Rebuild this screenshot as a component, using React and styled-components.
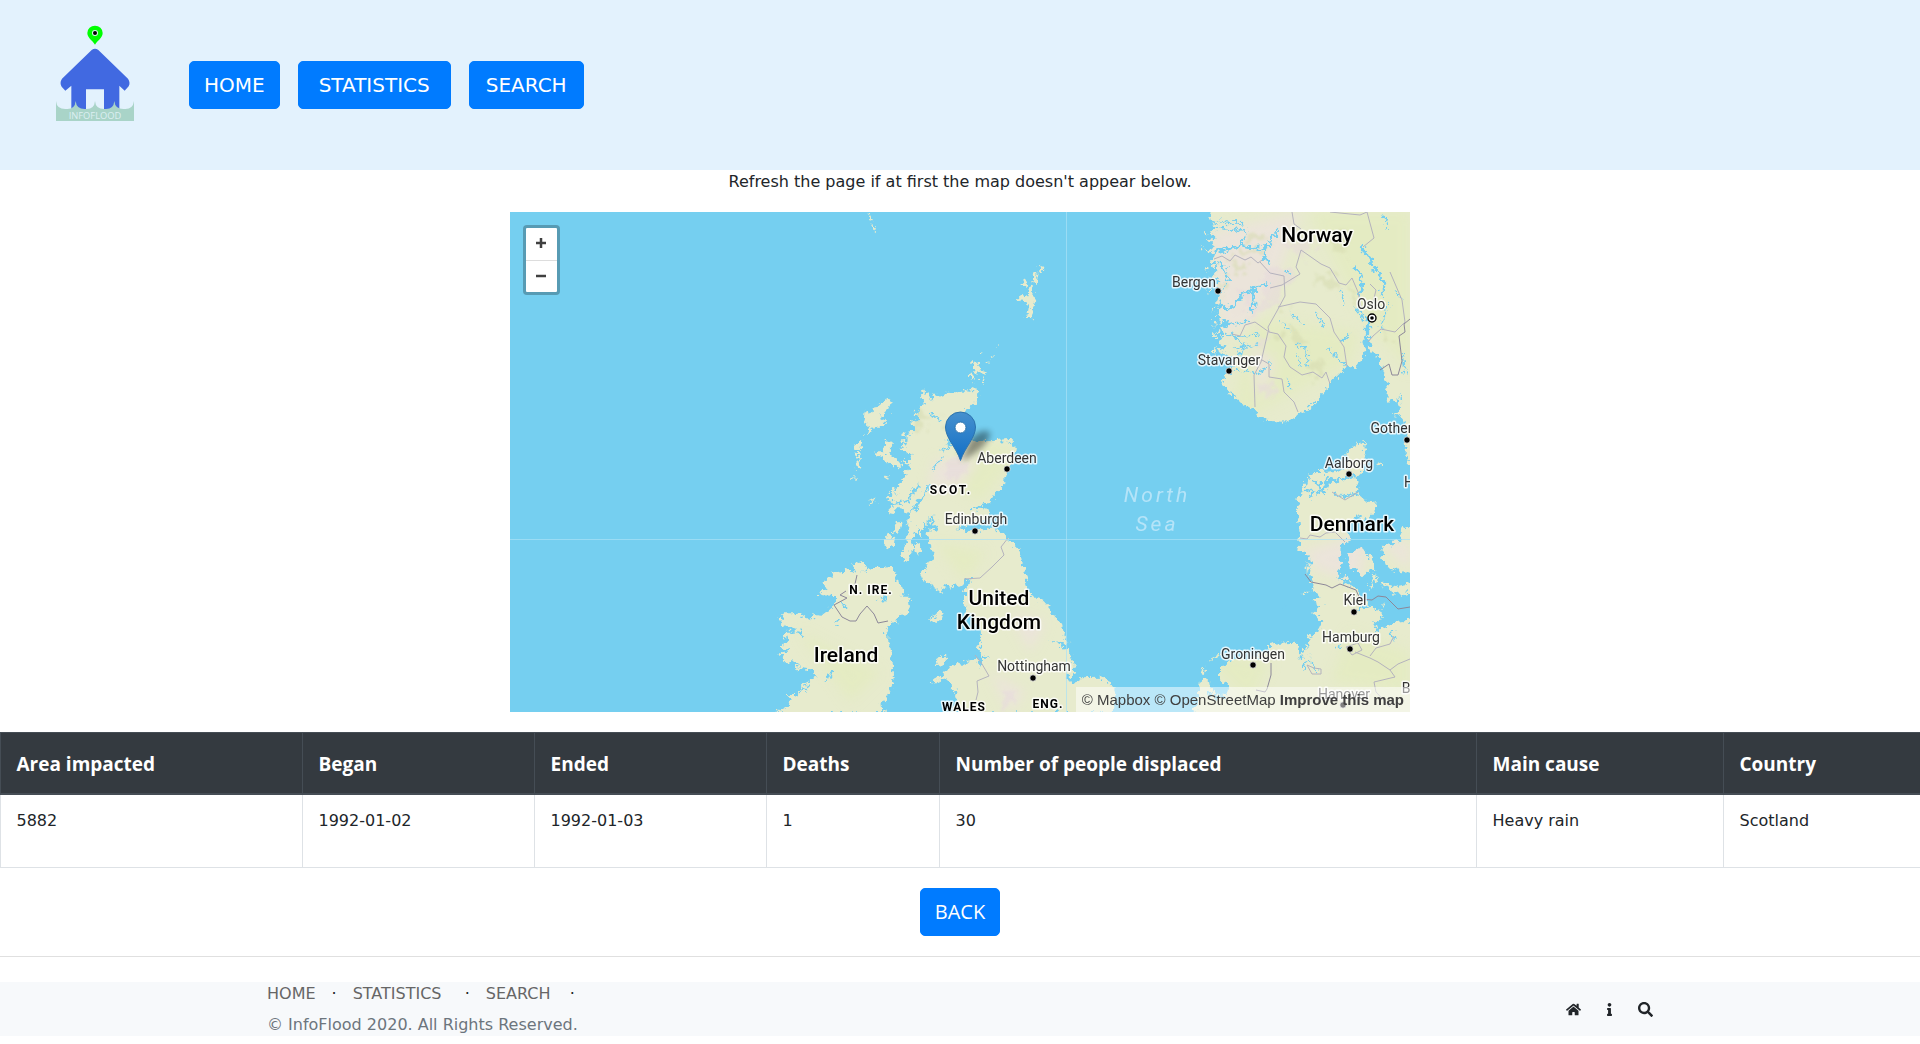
import React from "react";
import styled, { createGlobalStyle } from "styled-components";
import { FaHome, FaInfo, FaSearch } from "react-icons/fa";

const verdana = `Verdana, "DejaVu Sans", sans-serif`;
const segoe = `"Segoe UI", "Open Sans", sans-serif`;

const GlobalStyle = createGlobalStyle`
  *, *::before, *::after { box-sizing: border-box; }
  body {
    margin: 0;
    background: #fff;
    color: #212529;
    font-family: ${verdana};
    font-size: 16px;
    line-height: 24px;
  }
`;

const Header = styled.header`
  display: flex;
  align-items: center;
  min-height: 170px;
  padding: 0 55px;
  background: #e3f2fd;
`;

const LogoLink = styled.a`
  display: block;
  padding-bottom: 23px;
  margin-right: 54px;
  svg { display: block; }
`;

const Nav = styled.nav`
  display: flex;
  gap: 18px;
`;

const Button = styled.button`
  min-width: ${(p) => p.$min || 80}px;
  padding: 8px 14px;
  border: 1px solid #007bff;
  border-radius: 5px;
  background: #007bff;
  color: #fff;
  font-family: ${(p) => p.$font || verdana};
  font-size: 20px;
  line-height: 30px;
  cursor: pointer;
`;

const Main = styled.main`
  display: flex;
  flex-direction: column;
  align-items: center;
`;

const Hint = styled.p`
  margin: 0 0 18px;
`;

const MapBox = styled.section`
  position: relative;
  width: 900px;
  max-width: 100%;
  height: 500px;
  overflow: hidden;
  background: #75cff0;
`;

const MapDrawing = styled.svg`
  display: block;
`;

const ZoomControl = styled.div`
  position: absolute;
  top: 13px;
  left: 13px;
  display: flex;
  flex-direction: column;
  border: 3px solid rgba(0, 0, 0, 0.25);
  border-radius: 4px;
  background: #fff;
  background-clip: padding-box;
`;

const ZoomButton = styled.button`
  display: grid;
  place-items: center;
  width: 31px;
  height: 32px;
  padding: 0 1px 2px 0;
  border: 0;
  background: transparent;
  cursor: pointer;
  & + & { border-top: 1px solid #ddd; }
`;

const Attribution = styled.div`
  position: absolute;
  right: 0;
  bottom: 0;
  padding: 0 6px;
  background: rgba(255, 255, 255, 0.5);
  color: #404040;
  font-family: Arial, "Liberation Sans", sans-serif;
  font-size: 15px;
  line-height: 25px;
  a { color: inherit; text-decoration: none; }
`;

const Label = styled.text`
  font-family: Roboto, sans-serif;
  font-size: ${(p) => p.$size || 14}px;
  font-weight: ${(p) => p.$weight || 400};
  font-style: ${(p) => (p.$sea ? "italic" : "normal")};
  letter-spacing: ${(p) => p.$spacing || 0}px;
  fill: ${(p) => (p.$sea ? "#b5e4f8" : p.$weight ? "#000" : "#333")};
  stroke: ${(p) => (p.$sea ? "none" : "#fff")};
  stroke-width: 3px;
  stroke-opacity: 0.8;
  stroke-linejoin: round;
  paint-order: stroke;
  text-anchor: middle;
`;

const Table = styled.table`
  width: 100%;
  margin: 20px 0;
  border-collapse: collapse;
  table-layout: fixed;
`;

const Th = styled.th`
  padding: 16px 15px 14px 16px;
  border: 1px solid #454d55;
  border-bottom-width: 2px;
  background: #343a40;
  color: #fff;
  font-family: ${segoe};
  font-size: 19px;
  line-height: 30px;
  text-align: left;
`;

const Td = styled.td`
  padding: 14px 15px 34px 16px;
  border: 1px solid #dee2e6;
`;

const Rule = styled.hr`
  width: 100%;
  margin: 20px 0 25px;
  border: 0;
  border-top: 1px solid #e0e0e0;
`;

const Footer = styled.footer`
  background: #f7f9fb;
`;

const FooterInner = styled.div`
  display: flex;
  align-items: center;
  justify-content: space-between;
  max-width: 1386px;
  margin: 0 auto;
`;

const FooterLinks = styled.ul`
  display: flex;
  gap: 16px;
  margin: 0 0 8px;
  padding: 0;
  list-style: none;
  a { color: #666; text-decoration: none; }
`;

const FooterItem = styled.li`
  min-width: ${(p) => p.$min || 0}px;
`;

const Copyright = styled.p`
  margin: 0;
  color: #6c757d;
  line-height: 22px;
`;

const IconLinks = styled.div`
  display: flex;
  align-items: center;
  gap: 22px;
  a { display: block; color: #212529; }
  svg { display: block; }
`;

function Logo() {
  return (
    <svg width="80" height="97" viewBox="45 45 240 291" role="img" aria-label="InfoFlood">
      <path d="M165 104C158 92 142 84 142 69A23 22 0 0 1 188 69C188 84 172 92 165 104Z" fill="#0f0" />
      <circle cx="165" cy="69" r="9" fill="#d9f7e8" />
      <circle cx="165" cy="69" r="6" fill="#000" />
      <path d="M155 120Q165 112 175 120L264 206Q272 218 266 229L254 242 238 227V305H192V238H138V305H94V227L76 242 65 230Q58 218 66 206Z" fill="#4169e1" />
      <path d="M48 273Q50 297 76 297H82Q105 297 107 273Q109 297 134 297H140Q163 297 165 273Q167 297 192 297H198Q221 297 223 273Q225 297 250 297H256Q279 297 282 273V333H48Z" fill="#a9d4c8" />
      <text x="165" y="326" textAnchor="middle" fontFamily="Open Sans, sans-serif" fontSize="28" fontWeight="400" fill="#dceff2">INFOFLOOD</text>
    </svg>
  );
}

const towns = [
  ["Bergen", 684, 75, 708, 79],
  ["Stavanger", 719, 153, 719, 159],
  ["Aberdeen", 497, 251, 497, 257],
  ["Edinburgh", 466, 312, 465, 319],
  ["Nottingham", 524, 459, 523, 466],
  ["Gothenburg", 897, 221, 897, 228],
  ["Aalborg", 839, 256, 839, 262],
  ["Kiel", 845, 393, 844, 400],
  ["Hamburg", 841, 430, 840, 437],
  ["Groningen", 743, 447, 743, 453],
  ["Hanover", 834, 487, 833, 493],
];

function SeaMap() {
  return (
    <MapDrawing width="900" height="500" viewBox="0 0 900 500" role="img" aria-label="Map of the North Sea with a marker in Scotland">
      <defs>
        <filter id="coast" x="0" y="0" width="900" height="500" filterUnits="userSpaceOnUse" colorInterpolationFilters="sRGB">
          <feTurbulence type="fractalNoise" baseFrequency="0.2" numOctaves="3" seed="4" result="n" />
          <feDisplacementMap in="SourceGraphic" in2="n" scale="11" xChannelSelector="R" yChannelSelector="G" />
        </filter>
        <filter id="soft"><feGaussianBlur stdDeviation="6" /></filter>
        <filter id="relief" x="0" y="0" width="900" height="500" filterUnits="userSpaceOnUse" colorInterpolationFilters="sRGB">
          <feTurbulence type="fractalNoise" baseFrequency="0.07" numOctaves="3" seed="9" result="n" />
          <feDisplacementMap in="SourceGraphic" in2="n" scale="40" xChannelSelector="R" yChannelSelector="G" />
          <feGaussianBlur stdDeviation="0.8" />
        </filter>
        <filter id="shade" x="-50%" y="-50%" width="200%" height="200%"><feGaussianBlur stdDeviation="3" /></filter>
        <linearGradient id="pin" x1="0" y1="0" x2="0" y2="1">
          <stop offset="0" stopColor="#4690ce" />
          <stop offset="1" stopColor="#126fc6" />
        </linearGradient>
        <g id="land">
          <g transform="translate(270 18) scale(.33333)">
            <path d="M432 483L448 488 440 497 452 500 456 512 462 495 470 488 476 500 490 494 500 488 530 490 560 484 572 486 585 478 596 480 594 505 580 520 565 535 560 545 545 560 530 590 520 600 512 628 500 645 520 642 548 628 575 632 600 630 625 634 655 632 690 630 703 648 703 690 692 700 682 720 674 750 660 775 640 790 632 820H345L330 808 352 790 380 786 400 775 375 768 360 745 388 740 365 728 385 715 395 700 372 700 362 690 395 690 390 672 362 650 382 642 360 632 385 628 365 608 395 615 385 600 410 600 395 572 420 570 400 545 425 545 420 530 432 515 425 500Z" />
            <path d="M326 500L332 515 325 540 312 548 300 565 316 575 305 590 285 590 275 608 258 618 262 600 270 590 250 575 254 545 270 555 290 530 312 512Z" />
            <path d="M218 645L240 632 248 640 238 652 245 658 222 656ZM230 665L242 668 238 690 242 718 228 720 226 700 233 690ZM216 746L228 736 224 746Z" />
            <path d="M318 632L332 640 334 670 345 690 362 700 366 716 345 708 325 705 308 682 282 672 284 664 308 664 312 645ZM311 735L322 733 324 745 314 746Z" />
            <path d="M574 398L590 393 600 402 596 418 612 422 618 434 596 430 580 424 574 412ZM568 432L578 430 585 448 576 452ZM604 442L610 444 608 460 602 456ZM600 366L608 368 604 376ZM634 378L642 368 640 382ZM622 398L628 394 628 402ZM648 358L654 354 650 364Z" />
            <path d="M780 108L790 112 788 130 776 134ZM764 126L773 130 770 160 756 160ZM735 148L747 150 742 168 724 164ZM745 170L759 180 762 205 770 222 758 230 752 268 740 266 746 230 744 217 730 218 713 208 716 198 738 202Z" />
            <path d="M262 -48L274 -44 280 -30 272 -34ZM274 -24L288 0 286 6 276 -6Z" />
          </g>
          <g transform="translate(250 238) scale(.33333)">
            <path d="M445 60L765 0 760 20 750 45 735 75 720 95 705 125 700 145 680 160 650 170 632 178 665 175 688 182 684 202 660 215 620 226 600 230 620 240 660 242 690 232 720 245 745 265 760 280 778 300 790 350 800 390 805 420 815 440 850 452 875 480 890 510 905 520 915 560 928 580 905 580 870 570 905 588 930 610 945 650 940 670 920 690 945 703 960 682 1020 680 1055 698 1068 735 1060 790H575L590 745 580 710 555 688 530 700 512 700 545 675 565 650 620 635 650 630 665 650 670 630 695 625 670 620 655 598 665 570 662 545 650 520 620 490 612 460 612 425 622 400 640 392 615 388 600 410 575 405 560 415 545 405 545 430 520 410 495 395 482 375 500 350 515 320 522 295 505 280 500 250 515 240 532 242 520 200 512 200 520 235 500 195 500 238 490 220 485 262 470 230 465 265 452 258 462 285 440 335 425 335 430 300 445 262 440 235 455 190 430 185 420 170 400 190 380 185 405 160 380 150 400 130 430 130 385 125 415 110 440 95Z" />
            <path d="M530 630L545 615 560 630 550 648 535 645ZM540 478L548 482 540 505 520 520 514 515 525 492ZM468 278L480 285 482 308 470 318 462 300ZM385 248L405 262 400 290 380 295 366 275ZM410 220L430 218 415 245 400 250ZM326 158L355 142 345 152 330 162Z" />
            <path d="M285 340L300 335 322 350 305 368 330 355 395 352 405 370 410 395 428 410 430 435 420 440 445 440 450 470 440 490 415 492 412 515 385 528 375 545 385 560 385 590 398 605 395 640 402 665 400 700 385 735 365 765 375 790H45L90 765 80 735 105 735 130 705 160 690 165 670 150 655 130 652 100 655 120 640 75 635 60 610 90 600 60 590 90 570 70 560 80 545 110 545 60 520 65 490 105 490 130 495 145 510 165 492 190 495 225 465 225 435 172 432 200 415 190 395 215 380 215 365 250 372 265 352 275 368 285 370 275 345Z" />
          </g>
          <path transform="translate(630 -12) scale(.33333)" d="M205 20L215 60 235 70 210 80 240 85 205 100 235 110 200 120 225 140 195 150 230 165 205 180 240 185 215 200 235 215 210 235 245 240 230 262 240 285 225 300 250 310 240 330 225 345 250 345 240 370 268 352 265 375 230 395 255 400 235 425 260 440 230 455 270 465 285 500 265 515 250 535 255 560 275 585 300 605 325 622 345 628 355 650 380 662 430 665 465 655 480 640 505 625 530 600 555 575 575 545 600 520 620 500 645 505 665 480 675 450 665 420 680 400 678 360 688 360 687 420 695 460 715 470 725 500 735 530 745 570 740 605 775 600 780 625 760 650 785 645 795 670 800 700 795 740 805 790H850V20Z" />
          <path transform="translate(630 -12) scale(.33333)" d="M185 140L194 144 190 152ZM198 200L206 206 202 220ZM205 262L214 270 206 282ZM218 320L226 322 222 336ZM222 360L232 366 224 380ZM222 400L228 410 222 416ZM192 92L200 96 194 102ZM222 440L230 448 222 466Z" />
          <g transform="translate(570 228) scale(.33333)">
            <path d="M855 0L853 20 858 50 850 90 830 110 835 140 830 160 860 185 890 185 888 210 865 235 835 225 815 240 800 270 815 300 790 310 780 345 785 375 770 400 790 430 830 445 835 465 865 485 860 500 905 510 905 535 880 550 890 575 915 560 950 545 1020 540V840H335L355 770 360 720 385 715 390 740 410 750 405 770 440 770 445 730 420 725 420 690 440 665 470 655 530 650 570 640 570 615 600 608 645 605 655 630 650 650 675 645 665 620 685 625 690 660 683 600 690 585 715 580 718 560 730 548 700 520 715 505 725 500 700 480 725 480 705 455 690 425 695 380 690 350 675 335 655 330 660 290 655 240 652 180 665 155 675 125 700 97 740 95 790 90 800 75 795 45 820 20Z" />
            <path d="M800 345L840 325 870 345 880 385 850 405 810 385ZM905 310L935 320 945 295 960 315 970 265 1010 260V405L960 395 920 380 910 350ZM900 430L950 438 1010 425V455L955 465ZM885 398L888 410 872 450 866 448ZM785 405L812 420 805 428 790 420ZM890 68L912 62 900 76ZM900 490L918 492 908 502ZM366 685L378 680 370 705 362 702ZM385 665L415 646 414 653ZM680 360L690 385 680 402ZM670 455L690 455 680 465Z" />
          </g>
        </g>
        <mask id="landMask" maskUnits="userSpaceOnUse" x="0" y="0" width="900" height="500">
          <g filter="url(#coast)">
            <use href="#land" fill="#fff" />
            <g stroke="#000"><use href="#water" /></g>
          </g>
        </mask>
        <g id="water" fill="none" strokeWidth="5" strokeLinejoin="round">
          <path transform="translate(270 18) scale(.33333)" d="M450 548L484 578M480 662L505 655 500 632 520 650M490 676L460 718M420 765L385 815" />
          <path transform="translate(250 238) scale(.33333)" strokeWidth="6" d="M480 100L440 150 400 165M510 110L455 185M215 665L195 695M375 430L370 455 358 445M230 510V522M245 455L262 475M590 232L650 235M120 540L130 560M150 705L120 725M632 178L680 170" />
          <g transform="translate(630 -12) scale(.33333)">
            <path strokeWidth="9" d="M205 165L250 150 300 138 345 145 385 142 402 105 420 85M385 142L372 165 388 188M225 310L280 328 300 290 345 262 385 250M345 265L335 335M665 140L690 175 705 210 735 245 722 290M645 200L668 235 660 290M682 430V350" />
            <path strokeWidth="5" d="M235 60L260 70 310 68M240 85L325 95M300 135L325 95M260 375L330 365M275 410L360 405M285 445L355 435M240 180L265 240 235 290M250 215L270 200M260 400L310 430 300 470M285 510L345 520 385 505M732 45L745 90M600 270L608 315M410 355L460 395M450 335L488 375M525 340L550 375M465 430L500 440 505 505M470 460L482 500M560 440L600 485 620 500M440 530L446 565M765 265L780 300M790 460L795 520M645 320L690 380M430 210L455 225M385 480L395 505M745 310L720 390M630 400L600 430M780 590L765 620" />
          </g>
          <g transform="translate(570 228) scale(.33333)">
            <path strokeWidth="8" d="M675 150L700 155 690 175M700 125L720 130 710 160 735 150 745 125 800 115 830 105M730 165L740 105M670 690L683 660M935 570L940 605M860 500L835 510" />
            <path strokeWidth="5" d="M760 160L790 172 830 160M683 660L715 695M610 500L620 505M865 235L835 250M385 770L400 745M770 620L785 615" />
          </g>
        </g>
      </defs>
      <rect width="900" height="500" fill="#75cff0" />
      <g filter="url(#coast)">
        <use href="#land" fill="#e7ebcd" />
        <g stroke="#75cff0"><use href="#water" /></g>
      </g>
      <g mask="url(#landMask)">
        <g filter="url(#soft)">
          <path fill="#e4ebc2" d="M480 230L510 240 470 290 440 270ZM425 330L475 340 455 370ZM290 420L370 460 340 490ZM740 105L850 120 840 150 720 215ZM800 0L900 0V160L850 100ZM840 420L900 440V480L820 470ZM690 440L760 450 740 490Z" />
          <path fill="#ebe4da" d="M425 248L468 248 452 272 418 276ZM700 20L790 0 770 60 745 110 712 125ZM500 400L535 410 520 440ZM480 460L515 480 500 500ZM740 130L765 150 750 190ZM790 340L860 320 850 370 810 360ZM870 330L900 330 900 360Z" />
        </g>
        <g filter="url(#relief)" opacity="0.55">
          <path fill="#e6d9dc" d="M432 256L450 248 460 258 440 266ZM755 55L785 60 765 90 750 95ZM735 85L755 90 740 110ZM770 35L800 25 795 45ZM745 120L765 125 752 145ZM750 170L765 175 758 190ZM430 275L440 270 436 285ZM494 482L508 484 500 494Z" />
          <path fill="#d6dbb0" d="M735 30L765 28 760 36 735 38ZM715 50L740 55 725 64ZM805 60L830 70 825 80 808 70ZM770 118L790 122 800 136 775 130ZM795 145L815 160 800 165ZM760 90L780 100 770 108ZM840 70L852 92 842 88ZM815 20L840 30 830 38ZM870 110L885 130 876 130ZM402 200L430 206 415 214ZM440 225L455 240 445 242ZM710 70L722 78 712 84Z" />
        </g>
      </g>
      <g fill="none" stroke="#b4b2bd" strokeWidth="1">
        <path d="M782 0L784 12 791 17M704 47L712 44 720 49 725 43 735 48 741 45 748 51 752 48M760 76L772 73 790 62 786 55 791 38 811 52 820 56 829 71 836 73 842 66 848 80 851 95M750 50L760 61 774 64 775 84 767 99 758 115 759 120 745 110 735 113 730 124 722 122M758 120L751 150 744 163 745 195M759 120L768 122 776 134 774 145 780 155 792 163 803 160 812 166 816 160 820 172M768 95L790 90 806 92 820 106 824 120 834 135 837 155M752 148L759 152 759 165 772 167 774 180 784 190 788 200M857 0L864 26 853 35M860 72L866 78 862 95M880 60L892 88 895 110 885 120 871 117 863 124 858 130M820 0L840 2 850 3 857 0" />
        <path stroke="#8c8798" d="M900 107L894 112 895 120 889 124 892 149 888 163 882 163 879 152 870 158M347 363L345 372 341 376M336 379L330 383 337 386 324 393 332 405 340 409 346 409 350 402 357 394 364 402 368 411 378 409M795 362L801 370 816 373 822 376 830 372 846 378 850 387 862 388 868 384 876 385 888 397 900 395M761 451V463L757 477 755 480 746 478" />
        <path d="M498 326L491 335 494 343 482 355 470 366 454 367M465 443L472 452 479 464 467 469 468 480 466 488M790 326L797 327 800 323 810 325 816 321 825 320 835 330M822 280L835 288 848 280M845 440L860 446 868 450 880 458 888 452 900 447M880 458L885 465 864 470 866 480 880 495M797 453L804 456 811 457V462L802 462ZM836 435L848 431 852 438 842 443ZM860 444L866 436 880 432 884 424" />
      </g>
      <path d="M556.500 0V500M0 327.500H900" stroke="#a9e1f5" strokeOpacity="0.7" fill="none" />

      {towns.map(([name, x, y, cx, cy]) => (
        <g key={name}>
          <circle cx={cx} cy={cy} r="3.2" stroke="#fff" strokeOpacity="0.7" />
          <Label x={x} y={y}>{name}</Label>
        </g>
      ))}
      <circle cx="862" cy="106" r="4" fill="#fff" stroke="#000" strokeWidth="1.4" />
      <circle cx="862" cy="106" r="1.8" />
      <Label x="861" y="97">Oslo</Label>
      <Label x="807" y="30" $size={21} $weight={500}>Norway</Label>
      <Label x="842" y="319" $size={21} $weight={500}>Denmark</Label>
      <Label x="489" y="393" $size={21} $weight={500}>United</Label>
      <Label x="489" y="417" $size={21} $weight={500}>Kingdom</Label>
      <Label x="336" y="450" $size={21} $weight={500}>Ireland</Label>
      <Label x="441" y="282" $size={12} $weight={700} $spacing={2}>SCOT.</Label>
      <Label x="361" y="382" $size={12} $weight={700} $spacing={1}>N. IRE.</Label>
      <Label x="454" y="499" $size={12} $weight={700} $spacing={1}>WALES</Label>
      <Label x="538" y="496" $size={12} $weight={700} $spacing={1}>ENG.</Label>
      <Label x="647" y="290" $size={21} $spacing={3} $sea>North</Label>
      <Label x="647" y="319" $size={21} $spacing={3} $sea>Sea</Label>
      <Label x="899" y="275">H</Label>
      <Label x="896" y="481">B</Label>

      <path d="M451 249L460 228Q470 216 480 220Q480 235 451 249Z" fill="#000" opacity="0.4" filter="url(#shade)" />
      <path d="M450.500 248.500C446 235 435.500 226 435.500 215A15 15 0 0 1 465.500 215C465.500 226 455 235 450.500 248.500Z" fill="url(#pin)" stroke="#2b72ad" />
      <circle cx="450.500" cy="215.500" r="5.500" fill="#fff" stroke="#2f74ac" />
    </MapDrawing>
  );
}

const columns = [
  ["Area impacted", "5882", 302],
  ["Began", "1992-01-02", 232],
  ["Ended", "1992-01-03", 232],
  ["Deaths", "1", 173],
  ["Number of people displaced", "30", 537],
  ["Main cause", "Heavy rain", 247],
  ["Country", "Scotland", 197],
];

const Col = styled.col`
  width: ${(p) => p.$width}px;
`;

export default function App() {
  return (
    <>
      <GlobalStyle />
      <Header>
        <LogoLink href="#home" aria-label="InfoFlood home"><Logo /></LogoLink>
        <Nav>
          <Button type="button">HOME</Button>
          <Button type="button" $min={153}>STATISTICS</Button>
          <Button type="button" $min={115}>SEARCH</Button>
        </Nav>
      </Header>
      <Main>
        <Hint>Refresh the page if at first the map doesn't appear below.</Hint>
        <MapBox>
          <SeaMap />
          <ZoomControl>
            <ZoomButton type="button" aria-label="Zoom in">
              <svg width="10" height="10"><path d="M5 0V10M0 5H10" stroke="#404040" strokeWidth="2.500" /></svg>
            </ZoomButton>
            <ZoomButton type="button" aria-label="Zoom out">
              <svg width="10" height="10"><path d="M0 5H10" stroke="#404040" strokeWidth="2.500" /></svg>
            </ZoomButton>
          </ZoomControl>
          <Attribution>
            <a href="#mapbox">© Mapbox</a> <a href="#osm">© OpenStreetMap</a>{" "}
            <a href="#improve"><b>Improve this map</b></a>
          </Attribution>
        </MapBox>
        <Table>
          <colgroup>{columns.map(([name, , w]) => <Col key={name} $width={w} />)}</colgroup>
          <thead>
            <tr>{columns.map(([name]) => <Th key={name} scope="col">{name}</Th>)}</tr>
          </thead>
          <tbody>
            <tr>{columns.map(([name, value]) => <Td key={name}>{value}</Td>)}</tr>
          </tbody>
        </Table>
        <Button type="button" $font={segoe}>BACK</Button>
        <Rule />
      </Main>
      <Footer>
        <FooterInner>
          <div>
            <FooterLinks>
              <FooterItem><a href="#home">HOME</a></FooterItem>
              <FooterItem>·</FooterItem>
              <FooterItem $min={96}><a href="#statistics">STATISTICS</a></FooterItem>
              <FooterItem>·</FooterItem>
              <FooterItem $min={68}><a href="#search">SEARCH</a></FooterItem>
              <FooterItem>·</FooterItem>
            </FooterLinks>
            <Copyright>© InfoFlood 2020. All Rights Reserved.</Copyright>
          </div>
          <IconLinks>
            <a href="#home" aria-label="Home"><FaHome size={15} /></a>
            <a href="#about" aria-label="About"><FaInfo size={13} /></a>
            <a href="#search" aria-label="Search"><FaSearch size={15} /></a>
          </IconLinks>
        </FooterInner>
      </Footer>
    </>
  );
}
